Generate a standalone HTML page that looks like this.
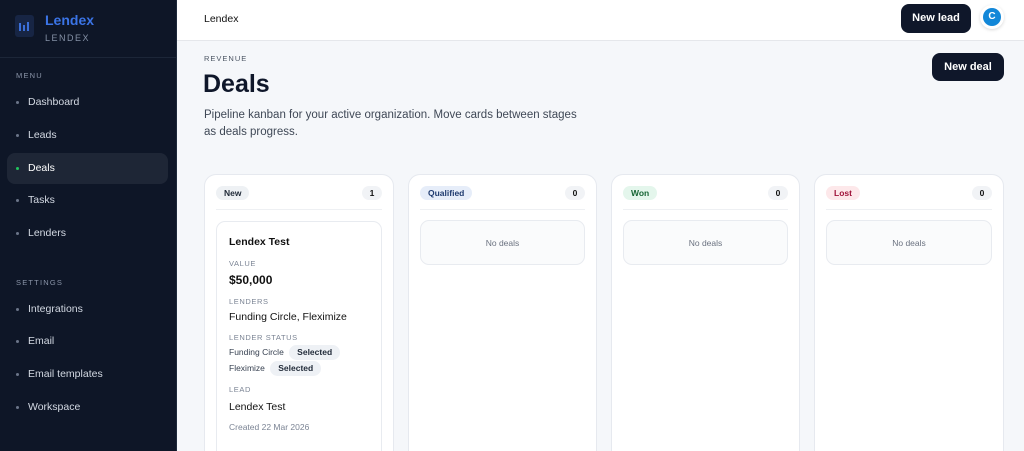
<!DOCTYPE html><html><head><style>
*{box-sizing:border-box;margin:0;padding:0}
html,body{width:1024px;height:451px;overflow:hidden}
body{font-family:"Liberation Sans",sans-serif;background:#f5f7fa;position:relative}
.sb{position:absolute;left:0;top:0;width:177px;height:451px;background:#0e1627;border-right:1px solid #1e293b}
.logo{position:absolute;left:15px;top:15px;width:19px;height:22px;background:#172544;border-radius:3px}
.logo i{position:absolute;bottom:6px;width:2px;background:#3b6fd8}
.brand{position:absolute;left:45px;top:12px;color:#3b74e6;font-size:14px;font-weight:bold}
.sub{position:absolute;left:45px;top:33px;color:#8591a6;font-size:9px;letter-spacing:1.5px}
.sep{position:absolute;left:0;top:57px;width:176px;border-top:1px solid #1c2638}
.sec{position:absolute;left:16px;font-size:7.5px;letter-spacing:1.2px;color:#8a94a8}
.it{position:absolute;left:7px;width:161px;height:31px;border-radius:8px;color:#d3d9e3;font-size:10.5px;line-height:31px;padding-left:21px}
.it:before{content:"";position:absolute;left:9px;top:14px;width:3px;height:3px;border-radius:50%;background:#6b7589}
.it.a{background:#1e2636;color:#fff}.it.a:before{background:#22c55e}
.top{position:absolute;left:177px;top:0;right:0;height:41px;background:#fff;border-bottom:1px solid #e5e7eb}
.btn{position:absolute;background:#0f172a;color:#fff;font-size:11px;font-weight:bold;border-radius:8px;text-align:center}
.col{position:absolute;top:174px;height:277px;background:#fff;border:1px solid #e6e9ef;border-bottom:none;border-radius:12px 12px 0 0;overflow:hidden}
.pill{position:absolute;left:11px;top:11px;height:14px;border-radius:7px;font-size:8.5px;line-height:14px;padding:0 8px;font-weight:bold}
.cnt{position:absolute;right:11px;top:11px;height:14px;width:20px;border-radius:7px;background:#f1f3f6;font-size:8.5px;line-height:14px;text-align:center;font-weight:bold;color:#111}
.hl{position:absolute;left:11px;right:11px;top:34px;border-top:1px solid #eef0f3}
.empty{position:absolute;left:11px;right:11px;top:45px;height:45px;border:1px solid #e8ebf0;border-radius:9px;background:#fafbfc;font-size:8.5px;color:#6b7280;text-align:center;line-height:45px}
.c{position:absolute;left:11px;right:11px;top:46px;height:231px;border:1px solid #e8ebf0;border-bottom:none;border-radius:9px 9px 0 0}
.c div{position:absolute;left:12px;white-space:nowrap}
.l{font-size:7.5px;color:#7b8494;letter-spacing:.6px}
.tg{display:inline-block;background:#eef1f5;border-radius:8px;padding:0 8px;height:15px;line-height:15px;font-weight:bold;margin-left:3px;color:#1f2937}
</style></head><body>
<div class="sb">
<div class="logo"><i style="left:4px;height:8px"></i><i style="left:8px;height:6px"></i><i style="left:12px;height:9px"></i></div>
<div class="brand">Lendex</div><div class="sub">LENDEX</div><div class="sep"></div>
<div class="sec" style="top:71px">MENU</div>
<div class="it" style="top:87px">Dashboard</div>
<div class="it" style="top:120px">Leads</div>
<div class="it a" style="top:153px">Deals</div>
<div class="it" style="top:185px">Tasks</div>
<div class="it" style="top:218px">Lenders</div>
<div class="sec" style="top:278px">SETTINGS</div>
<div class="it" style="top:294px">Integrations</div>
<div class="it" style="top:326px">Email</div>
<div class="it" style="top:359px">Email templates</div>
<div class="it" style="top:392px">Workspace</div>
</div>
<div class="top"><div style="position:absolute;left:27px;top:13px;font-size:10.5px;color:#111">Lendex</div></div>
<div class="btn" style="left:901px;top:4px;width:70px;height:29px;line-height:29px">New lead</div>
<div style="position:absolute;left:980px;top:5px;width:24px;height:24px;border-radius:50%;background:#fff;box-shadow:0 1px 3px rgba(0,0,0,.15)"><div style="position:absolute;left:3px;top:3px;width:18px;height:18px;border-radius:50%;background:#1287d8;color:#fff;font-size:10px;font-weight:bold;text-align:center;line-height:18px">C</div></div>
<div style="position:absolute;left:204px;top:54px;font-size:7.5px;letter-spacing:1px;color:#4b5563">REVENUE</div>
<div style="position:absolute;left:203px;top:70px;font-size:25px;font-weight:bold;color:#0f172a">Deals</div>
<div style="position:absolute;left:204px;top:107px;width:385px;font-size:11.5px;line-height:17px;color:#3f4856">Pipeline kanban for your active organization. Move cards between stages as deals progress.</div>
<div class="btn" style="left:932px;top:53px;width:72px;height:28px;line-height:28px">New deal</div>

<div class="col" style="left:204px;width:190px"><div class="pill" style="background:#eef1f4;color:#1f2937">New</div><div class="cnt">1</div><div class="hl"></div>
<div class="c">
<div style="top:14px;font-size:10.5px;font-weight:bold;color:#111">Lendex Test</div>
<div class="l" style="top:37px">VALUE</div>
<div style="top:51px;font-size:12px;font-weight:bold;color:#111">$50,000</div>
<div class="l" style="top:75px">LENDERS</div>
<div style="top:89px;font-size:10.5px;color:#111">Funding Circle, Fleximize</div>
<div class="l" style="top:111px">LENDER STATUS</div>
<div style="top:123px;font-size:8.5px;color:#374151">Funding Circle <span class="tg">Selected</span></div>
<div style="top:139px;font-size:8.5px;color:#374151">Fleximize <span class="tg">Selected</span></div>
<div class="l" style="top:163px">LEAD</div>
<div style="top:179px;font-size:10.5px;color:#111">Lendex Test</div>
<div style="top:200px;font-size:8.5px;color:#7b8494">Created 22 Mar 2026</div>
</div></div>
<div class="col" style="left:408px;width:189px"><div class="pill" style="background:#e6edf9;color:#1e3a6e">Qualified</div><div class="cnt">0</div><div class="hl"></div><div class="empty">No deals</div></div>
<div class="col" style="left:611px;width:189px"><div class="pill" style="background:#e4f6ec;color:#166534">Won</div><div class="cnt">0</div><div class="hl"></div><div class="empty">No deals</div></div>
<div class="col" style="left:814px;width:190px"><div class="pill" style="background:#fde8ea;color:#9f1239">Lost</div><div class="cnt">0</div><div class="hl"></div><div class="empty">No deals</div></div>
</body></html>
